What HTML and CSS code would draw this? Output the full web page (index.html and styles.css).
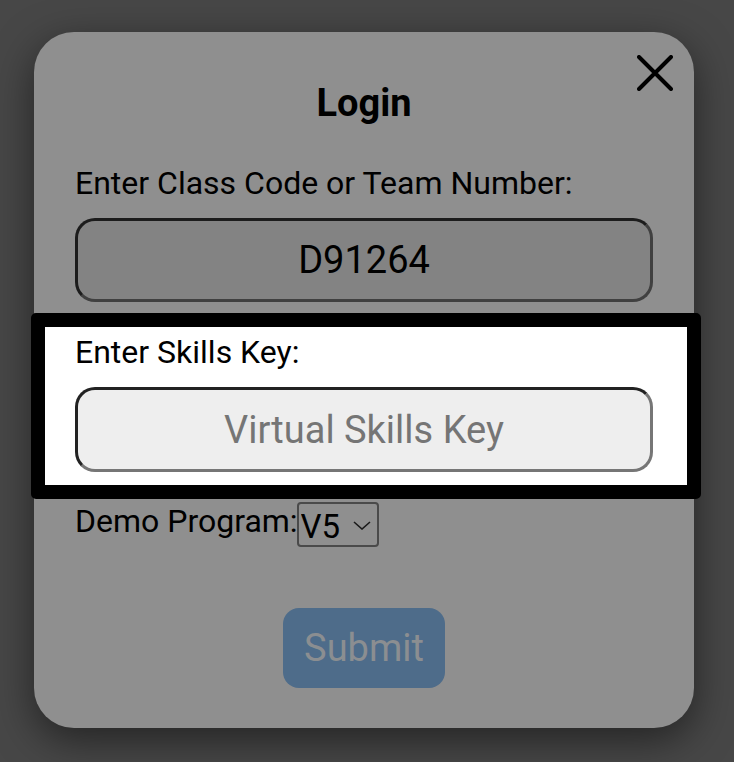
FILE: index.html
```html
<!DOCTYPE html>
<html lang="en">
<head>
<meta charset="utf-8">
<title>Login</title>
<link rel="stylesheet" href="styles.css">
</head>
<body>
<div class="modal">
  <button class="close" aria-label="Close">
    <svg width="36" height="36" viewBox="0 0 36 36"><path d="M2 2 L34 34 M34 2 L2 34" stroke="#000" stroke-width="4" stroke-linecap="round" fill="none"/></svg>
  </button>
  <h2 class="title">Login</h2>
  <label class="label first">Enter Class Code or Team Number:</label>
  <input class="field dim" type="text" value="D91264">
  <div class="spotlight">
    <label class="label">Enter Skills Key:</label>
    <input class="field bright" type="text" placeholder="Virtual Skills Key">
  </div>
  <div class="demo">
    <span class="label">Demo Program:</span>
    <span class="select-wrap">
      <select class="select"><option>V5</option></select>
      <svg class="chev" width="18" height="9" viewBox="0 0 18 9"><path d="M1 1 L9 8 L17 1" stroke="#1a1a1a" stroke-width="1.6" fill="none"/></svg>
    </span>
  </div>
  <div class="actions">
    <button class="submit" disabled>Submit</button>
  </div>
</div>
</body>
</html>
```

FILE: styles.css
```css
* { box-sizing: border-box; }
html, body { margin: 0; padding: 0; }
body {
  background: #474747;
  width: 734px;
  height: 762px;
  overflow: hidden;
  font-family: Roboto, "Liberation Sans", sans-serif;
  color: #000;
  padding-top: 32px;
  padding-left: 34px;
}
.modal {
  position: relative;
  width: 660px;
  height: 696px;
  background: #8f8f8f;
  border-radius: 40px;
  box-shadow: 0 12px 40px rgba(0,0,0,0.5);
  padding: 49px 41px 0 41px;
  display: flex;
  flex-direction: column;
}
.close {
  position: absolute;
  top: 23px;
  right: 21px;
  width: 36px;
  height: 36px;
  padding: 0;
  border: 0;
  background: none;
  line-height: 0;
}
.title {
  margin: 0;
  font-size: 38px;
  line-height: 44px;
  font-weight: 700;
  text-align: center;
}
.label {
  display: block;
  font-size: 32px;
  line-height: 38px;
  font-weight: 400;
}
.label.first { margin-top: 39px; }
.field {
  display: block;
  width: 100%;
  height: 84px;
  margin-top: 16px;
  border-width: 3px;
  border-style: solid;
  border-radius: 20px;
  font-family: Roboto, "Liberation Sans", sans-serif;
  font-size: 38px;
  text-align: center;
  padding: 0 10px;
  color: #000;
  outline: none;
}
.field.dim {
  background: #838383;
  border-color: #1c1c1c #404040 #404040 #1c1c1c;
}
.field.bright {
  height: 85px;
  background: #eeeeee;
  border-color: #222222 #767676 #767676 #222222;
}
.field::placeholder { color: #757575; opacity: 1; }
.spotlight {
  margin: 11px -48px 0 -44px;
  background: #fff;
  border: 14px solid #000;
  border-radius: 5px;
  padding: 6px 34px 13px 30px;
}
.demo {
  display: flex;
  align-items: flex-start;
  margin-top: 3px;
}
.demo .label { display: inline-block; }
.select-wrap {
  position: relative;
  display: inline-block;
  margin-left: -1px;
}
.select {
  appearance: none;
  -webkit-appearance: none;
  width: 82px;
  height: 45px;
  border: 2px solid #4a4a4a;
  border-radius: 4px;
  background: transparent;
  font-family: Roboto, "Liberation Sans", sans-serif;
  font-size: 33px;
  color: #000;
  padding: 3px 0 0 2px;
  margin: 0;
}
.chev {
  position: absolute;
  left: 56px;
  top: 19px;
  pointer-events: none;
}
.actions {
  display: flex;
  justify-content: center;
  margin-top: 61px;
}
.submit {
  width: 162px;
  height: 80px;
  border: 0;
  border-radius: 16px;
  background: #4e6c8a;
  color: #8b8e91;
  font-family: Roboto, "Liberation Sans", sans-serif;
  font-size: 38px;
  padding: 0;
}
```
